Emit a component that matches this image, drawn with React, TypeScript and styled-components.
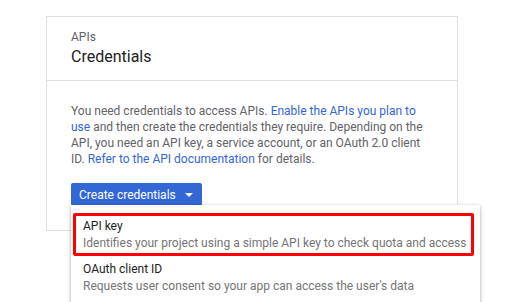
import styled, { createGlobalStyle } from "styled-components";

const GlobalStyle = createGlobalStyle`
  html, body {
    margin: 0;
    padding: 0;
    background: #ffffff;
    font-family: Roboto, "Liberation Sans", Arial, sans-serif;
  }
`;

const Page = styled.div`
  padding: 16px 0 0 46px;
  height: 302px;
  box-sizing: border-box;
  overflow: hidden;
`;

const Card = styled.div`
  position: relative;
  width: 412px;
  box-sizing: border-box;
  border: 1px solid #e0e0e0;
  background: #fff;
`;

const Header = styled.div`
  padding: 12px 24px 13px;
  border-bottom: 1px solid #e0e0e0;
`;

const Eyebrow = styled.div`
  font-size: 12px;
  line-height: 16px;
  color: #5f6368;
`;

const Title = styled.div`
  margin-top: 2px;
  font-size: 16px;
  line-height: 20px;
  color: #212121;
`;

const Body = styled.div`
  padding: 22px 24px 24px;
`;

const Text = styled.p`
  margin: 0;
  font-size: 12px;
  line-height: 16px;
  color: #5f6368;
`;

const Link = styled.a`
  color: #3367d6;
  text-decoration: none;
`;

const Button = styled.button`
  margin-top: 16px;
  display: inline-flex;
  align-items: center;
  gap: 9px;
  height: 23px;
  padding: 0 9px 0 8px;
  border: none;
  border-radius: 2px;
  background: #3367d6;
  color: #fff;
  font-family: inherit;
  font-size: 12px;
`;

const Caret = styled.span`
  width: 0;
  height: 0;
  border-left: 4px solid transparent;
  border-right: 4px solid transparent;
  border-top: 4px solid #fff;
`;

const Menu = styled.div`
  position: absolute;
  left: 24px;
  top: 188px;
  width: 409px;
  padding: 8px 0;
  background: #fff;
  box-shadow: 0 1px 3px rgba(0, 0, 0, 0.25), 0 2px 6px rgba(0, 0, 0, 0.12);
`;

const Item = styled.div`
  position: relative;
  padding: 5px 12px;
`;

const ItemTitle = styled.div`
  font-size: 12px;
  line-height: 16.5px;
  color: #212121;
`;

const ItemDesc = styled.div`
  font-size: 12px;
  line-height: 16.5px;
  color: #757575;
  white-space: nowrap;
`;

const Highlight = styled.div`
  position: absolute;
  left: 2px;
  top: 0;
  width: 401px;
  height: 43px;
  box-sizing: border-box;
  border: 3px solid #ff0000;
  border-radius: 2px;
`;

export default function App() {
  return (
    <>
      <GlobalStyle />
      <Page>
        <Card>
          <Header>
            <Eyebrow>APIs</Eyebrow>
            <Title>Credentials</Title>
          </Header>
          <Body>
            <Text>
              You need credentials to access APIs.{" "}
              <Link href="#">Enable the APIs you plan to use</Link> and then
              create the credentials they require. Depending on the API, you
              need an API key, a service account, or an OAuth 2.0 client ID.{" "}
              <Link href="#">Refer to the API documentation</Link> for details.
            </Text>
            <Button>
              Create credentials
              <Caret />
            </Button>
          </Body>
          <Menu>
            <Item>
              <Highlight />
              <ItemTitle>API key</ItemTitle>
              <ItemDesc>
                Identifies your project using a simple API key to check quota
                and access
              </ItemDesc>
            </Item>
            <Item>
              <ItemTitle>OAuth client ID</ItemTitle>
              <ItemDesc>
                Requests user consent so your app can access the user's data
              </ItemDesc>
            </Item>
          </Menu>
        </Card>
      </Page>
    </>
  );
}
